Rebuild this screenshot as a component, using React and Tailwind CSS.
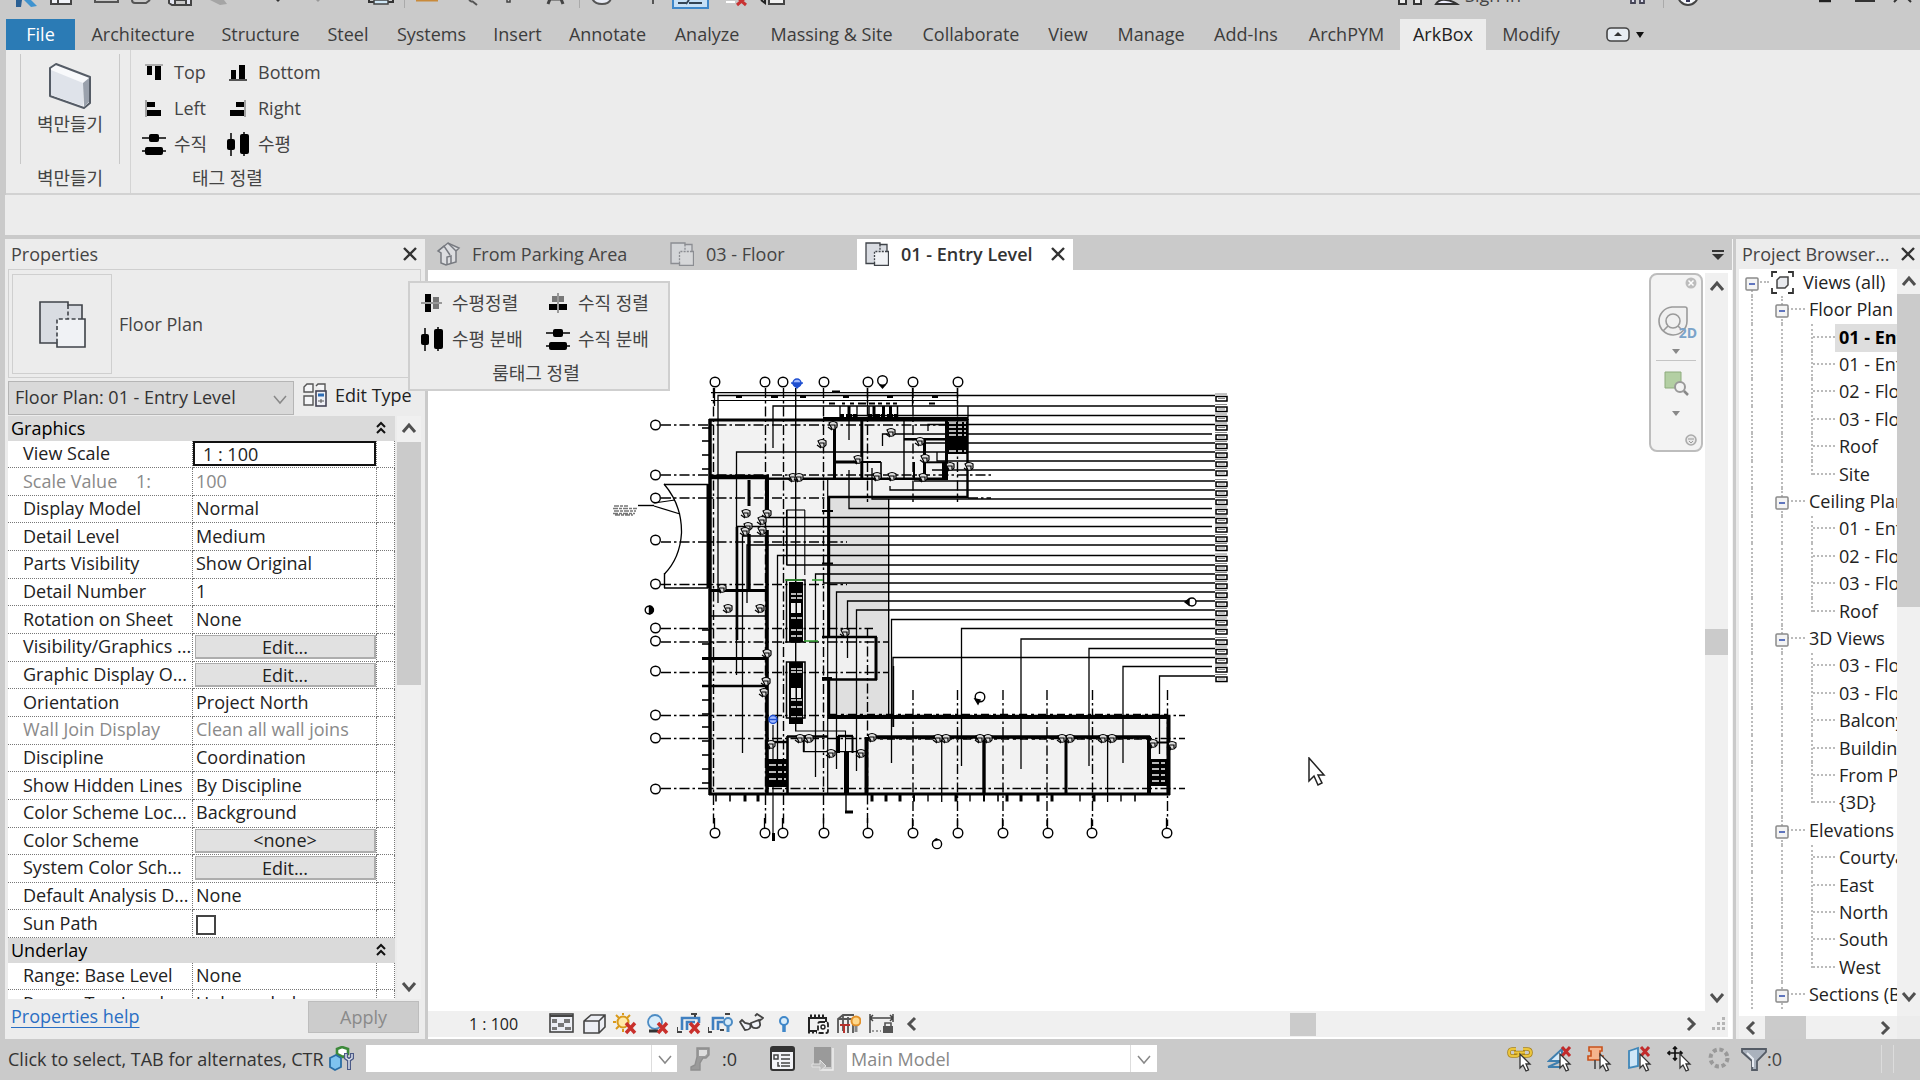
import React from "react";

/* ---------- shared glyphs ---------- */

function Svg({ w = 24, h = 24, vb, children, className = "" }) {
  return (
    <svg width={w} height={h} viewBox={vb || `0 0 ${w} ${h}`} fill="none" aria-hidden="true" className={"shrink-0 " + className}>
      {children}
    </svg>
  );
}

function Chevron({ dir = "up", thin = false, className = "" }) {
  const d = {
    up: "M2 11 L8 4 L14 11",
    down: "M2 5 L8 12 L14 5",
    left: "M11 2 L5 8 L11 14",
    right: "M5 2 L11 8 L5 14",
  }[dir];
  return (
    <Svg w={16} h={16} className={className}>
      <path d={d} stroke={thin ? "#888" : "#505050"} strokeWidth={thin ? 1.5 : 3} />
    </Svg>
  );
}

function CloseX({ size = 16 }) {
  return (
    <Svg w={size} h={size} vb="0 0 16 16">
      <path d="M2 2 L14 14 M14 2 L2 14" stroke="#333" strokeWidth="2.4" />
    </Svg>
  );
}

const Pages = ({ faded = false, size = 26 }) => (
  <Svg w={size} h={size} vb="0 0 48 48">
    <g stroke={faded ? "#8b8d92" : "#3f4349"} strokeWidth={size > 30 ? 1.6 : 2.6}>
      <path d="M2 2 H30 V5 H44 V19 H19 V43 H2 Z" fill={faded ? "#d3d5d8" : "#d9dce2"} stroke="none" />
      <path d="M19 19 H47 V47 H19 Z" fill={faded ? "#d6d7d9" : "#f0f2f5"} stroke="none" />
      <path d="M44 19 H47 V47 H19 V43 H2 V2 H30 V5 H44 V19" />
      <path d="M30 5 V19 M44 19 H19 V43" strokeDasharray="4 2.4" />
    </g>
  </Svg>
);

const AlignTop = () => (
  <Svg><path d="M3 5 H21" stroke="#999" strokeWidth="1.5" /><path d="M5 6 h5 v9 h-5z M13 6 h6 v14 h-6z" fill="#000" /></Svg>
);
const AlignBottom = () => (
  <Svg><path d="M3 20 H21" stroke="#222" strokeWidth="1.5" /><path d="M5 10 h5 v9 h-5z M13 5 h6 v14 h-6z" fill="#000" /></Svg>
);
const AlignLeft = () => (
  <Svg><path d="M4 4 V21" stroke="#888" strokeWidth="1.5" /><path d="M5 6 h8 v5 h-8z M5 14 h14 v6 h-14z" fill="#000" /></Svg>
);
const AlignRight = () => (
  <Svg><path d="M19 4 V21" stroke="#888" strokeWidth="1.5" /><path d="M10 6 h8 v5 h-8z M4 14 h14 v6 h-14z" fill="#000" /></Svg>
);
const DistV = () => (
  <Svg>
    <path d="M0 6 H24 M0 19 H24" stroke="#000" strokeWidth="1.5" />
    <rect x="7" y="2" width="10" height="8" rx="2" fill="#000" />
    <rect x="3" y="15" width="18" height="8" rx="2" fill="#000" />
  </Svg>
);
const DistH = () => (
  <Svg>
    <path d="M5 1 V24 M18 0 V24" stroke="#000" strokeWidth="1.5" />
    <rect x="1" y="7" width="8" height="11" rx="2" fill="#000" />
    <rect x="14" y="2" width="9" height="20" rx="2" fill="#000" />
  </Svg>
);
const CenterH = () => (
  <Svg><path d="M5 3 h6 v18 h-6z" fill="#000" /><path d="M13 6 h6 v12 h-6z" fill="#777" /><path d="M1 12 H22" stroke="#999" strokeWidth="2" /></Svg>
);
const CenterV = () => (
  <Svg><path d="M6 5 h12 v6 h-12z" fill="#777" /><path d="M3 13 h18 v6 h-18z" fill="#000" /><path d="M12 2 V22" stroke="#999" strokeWidth="2" /></Svg>
);

/* ---------- title strip ---------- */

function TitleBar() {
  return (
    <header className="relative flex h-[19px] shrink-0 items-start overflow-hidden pl-3 text-[#444]">
      <Svg w={28} h={8}><path d="M4 0 h6 l-1 7 h-5z" fill="#2a5f93" /><path d="M12 0 h7 l6 6 -6 1z" fill="#3f93cf" /></Svg>
      <Svg w={24} h={8} className="ml-2.5"><path d="M1 -4 h20 v8 h-20z M8 -4 v8" fill="#f1f3f8" stroke="#444" strokeWidth="2" /></Svg>
      <Svg w={26} h={8} className="ml-5"><path d="M1 -3 V2 H24 V-3" stroke="#555" strokeWidth="2" /></Svg>
      <Svg w={22} h={8} className="ml-2.5"><path d="M2 -4 V0 Q2 3 5 3 H16 L20 0" stroke="#555" strokeWidth="2" /></Svg>
      <Svg w={26} h={8} className="ml-4"><path d="M1 -4 V3 L4 5 H23 V-4 M7 4 V0 H18 V4" fill="#e4e6f2" stroke="#444" strokeWidth="2" /></Svg>
      <Svg w={22} h={8} className="ml-3.5"><path d="M2 0 h14 l3 4 -7 1z" fill="#a5a5a5" /></Svg>
      <Svg w={8} h={4} className="ml-11"><path d="M2 0 h4 l-2 2z" fill="#333" /></Svg>
      <Svg w={8} h={4} className="ml-8"><path d="M2 0 h4 l-2 2z" fill="#999" /></Svg>
      <Svg w={26} h={8} className="ml-[46px]"><path d="M1 0 V2 H25 V0" stroke="#333" strokeWidth="2" /><path d="M6 0 h14 v4 h-14z" fill="#cfe7f6" stroke="#444" strokeWidth="1.5" /></Svg>
      <span className="ml-2.5 h-2 w-px bg-[#aaa]" />
      <Svg w={24} h={4} className="ml-2.5"><path d="M1 0 H23" stroke="#c98a3a" strokeWidth="3" /></Svg>
      <Svg w={14} h={8} className="ml-7"><path d="M2 0 L5 2 M5 1 L10 5" stroke="#555" strokeWidth="2" /></Svg>
      <Svg w={8} h={4} className="ml-6"><path d="M2 0 v2 h3 v-2" stroke="#444" strokeWidth="1.5" /></Svg>
      <Svg w={22} h={8} className="ml-8"><path d="M3 4 L5 -1 H16 L18 4" stroke="#444" strokeWidth="3" /></Svg>
      <span className="ml-3 h-2 w-px bg-[#aaa]" />
      <Svg w={24} h={8} className="ml-2.5"><path d="M2 -2 Q4 4 12 4 T21 -2" fill="#e9ecf5" stroke="#555" strokeWidth="2" /></Svg>
      <Svg w={8} h={6} className="ml-9"><path d="M3 0 V4" stroke="#555" strokeWidth="2" /></Svg>
      <Svg w={38} h={10} className="ml-3.5"><path d="M1 -4 H36 V8 H1 Z" fill="#c6e0f7" stroke="#3f87c9" strokeWidth="2" /><path d="M6 3 h8 M17 3 h13 M14 4 l3 -4" stroke="#345" strokeWidth="2" /></Svg>
      <Svg w={24} h={8} className="ml-4"><path d="M0 2 h9" stroke="#fff" strokeWidth="2" /><path d="M11 5 L19 -2 M12 -2 L20 5" stroke="#c83232" strokeWidth="3" /></Svg>
      <Svg w={28} h={8} className="ml-2.5"><path d="M1 0 l4 3 v-3" stroke="#222" strokeWidth="2" /><path d="M9 -4 V4 H24 V-4" fill="#f2f2f2" stroke="#444" strokeWidth="2" /></Svg>
      <div className="ml-auto flex items-start pr-1.5">
        <Svg w={28} h={8}><path d="M2 -4 V4 H9 V-4 M17 -4 V4 H24 V-4" fill="#eee" stroke="#333" strokeWidth="2" /></Svg>
        <Svg w={28} h={8} className="ml-2"><path d="M3 4 Q6 -1 13 0 T24 4 Z" fill="#eef" stroke="#333" strokeWidth="2" /></Svg>
        <button className="-mt-[17px] ml-1 mr-2.5 text-[18px] leading-6">Sign In</button>
        <Svg w={18} h={8} className="ml-[98px]"><path d="M2 -4 V3 H6 V-4 M11 -4 V3 H15 V-4" fill="#dde" stroke="#445" strokeWidth="1.8" /></Svg>
        <span className="ml-4 h-2 w-px bg-[#aaa]" />
        <Svg w={26} h={8} className="ml-3"><circle cx="12" cy="-5" r="10" fill="#f5f7fb" stroke="#444" strokeWidth="2" /><path d="M10 0 h4 v2 h-4z" fill="#335" /></Svg>
        <Svg w={16} h={4} className="ml-[116px]"><path d="M1 1 H13" stroke="#222" strokeWidth="2.4" /></Svg>
        <Svg w={22} h={4} className="ml-5"><path d="M2 -2 V1 H20 V-2" stroke="#333" strokeWidth="2" /></Svg>
        <Svg w={22} h={4} className="ml-4"><path d="M2 2 L5 -1 M19 2 L16 -1" stroke="#333" strokeWidth="2" /></Svg>
      </div>
    </header>
  );
}

/* ---------- ribbon ---------- */

const TABS = [
  ["Architecture", "w-[130px]"], ["Structure", "w-[105px]"], ["Steel", "w-[70px]"], ["Systems", "w-[97px]"],
  ["Insert", "w-[75px]"], ["Annotate", "w-[105px]"], ["Analyze", "w-[94px]"], ["Massing & Site", "w-[155px]"],
  ["Collaborate", "w-[124px]"], ["View", "w-[70px]"], ["Manage", "w-[96px]"], ["Add-Ins", "w-[94px]"],
  ["ArchPYM", "w-[107px]"], ["ArkBox", "w-[86px]"], ["Modify", "w-[90px]"],
];

function RibbonTabs() {
  return (
    <nav className="flex h-[31px] shrink-0 items-stretch pl-1.5 text-[18px] leading-7 text-[#3c3c3c]">
      <button className="mr-[3px] w-[69px] bg-[#2b7bb5] pb-0.5 text-white">File</button>
      {TABS.map(([t, w]) => (
        <button key={t} className={`${w} whitespace-nowrap pb-0.5 ${t === "ArkBox" ? "bg-[#ececec] text-[#222]" : ""}`}>{t}</button>
      ))}
      <button aria-label="Minimize ribbon" className="ml-[30px] flex items-center gap-1.5">
        <Svg w={24} h={15}><rect x="1" y="1" width="22" height="13" rx="4" fill="#e8edf3" stroke="#444" strokeWidth="1.6" /><path d="M8 9 L12 5 L16 9Z" fill="#333" /></Svg>
        <Svg w={8} h={6}><path d="M0 0 H8 L4 6Z" fill="#111" /></Svg>
      </button>
    </nav>
  );
}

function Tool({ icon, children }) {
  return (
    <button className="flex items-center gap-2 whitespace-nowrap text-[18px] leading-6">
      {icon}
      <span>{children}</span>
    </button>
  );
}

function Ribbon() {
  return (
    <section className="ml-1.5 flex h-[145px] shrink-0 border-b-2 border-[#d2d2d2] bg-[#ececec] text-[#444]">
      <div className="flex w-[125px] flex-col items-center border-r border-[#d4d4d4] pl-1 pt-1">
        <button className="flex h-[110px] w-[100px] flex-col items-center border-x border-[#c8c8c8] pt-2 text-[18px] leading-7">
          <Svg w={44} h={48}>
            <path d="M2 6 L8 2 L42 15 V41 L36 46 L2 34 Z" fill="#f8f9fb" stroke="#555c66" strokeWidth="2" strokeLinejoin="round" />
            <path d="M3 8 L35 21 V44 L3 33 Z" fill="#dfe3ea" />
            <path d="M35 21 L41 16 V40 L36 45 Z" fill="#9aa1ac" />
          </Svg>
          벽만들기
        </button>
        <span className="text-[18px] leading-7">벽만들기</span>
      </div>
      <div className="flex w-[220px] flex-col pl-[11px] pt-2.5">
        <div className="grid grid-cols-[84px_1fr] gap-y-3">
          <Tool icon={<AlignTop />}>Top</Tool>
          <Tool icon={<AlignBottom />}>Bottom</Tool>
          <Tool icon={<AlignLeft />}>Left</Tool>
          <Tool icon={<AlignRight />}>Right</Tool>
          <Tool icon={<DistV />}>수직</Tool>
          <Tool icon={<DistH />}>수평</Tool>
        </div>
        <span className="mt-2 pl-[50px] text-[18px] leading-7">태그 정렬</span>
      </div>
    </section>
  );
}

/* ---------- properties ---------- */

const PROPS = [
  ["View Scale", "1 : 100", "input"],
  ["Scale Value    1:", "100", "off"],
  ["Display Model", "Normal"],
  ["Detail Level", "Medium"],
  ["Parts Visibility", "Show Original"],
  ["Detail Number", "1"],
  ["Rotation on Sheet", "None"],
  ["Visibility/Graphics ...", "Edit...", "button"],
  ["Graphic Display O...", "Edit...", "button"],
  ["Orientation", "Project North"],
  ["Wall Join Display", "Clean all wall joins", "off"],
  ["Discipline", "Coordination"],
  ["Show Hidden Lines", "By Discipline"],
  ["Color Scheme Loc...", "Background"],
  ["Color Scheme", "<none>", "button"],
  ["System Color Sch...", "Edit...", "button"],
  ["Default Analysis D...", "None"],
  ["Sun Path", "", "check"],
];

function GroupRow({ title }) {
  return (
    <tr className="bg-[#dadada]">
      <th colSpan={3} scope="colgroup" className="p-0 font-normal">
        <div className="flex items-center justify-between pl-[3px] pr-2">
          {title}
          <Svg w={12} h={14}><path d="M2 6 L6 2 L10 6 M2 12 L6 8 L10 12" stroke="#111" strokeWidth="2" /></Svg>
        </div>
      </th>
    </tr>
  );
}

function PropRow({ name, value, kind }) {
  const off = kind === "off";
  const line = "border-b border-dotted border-[#777]";
  return (
    <tr className={off ? "text-[#8a8a8a]" : "text-[#222]"}>
      <th scope="row" className={`${line} overflow-hidden whitespace-pre border-r p-0 pb-0.5 pl-[15px] text-left font-normal`}>{name}</th>
      <td className={`${line} overflow-hidden whitespace-nowrap border-r p-0 ${kind === "button" || kind === "input" ? "" : "pb-0.5 pl-[3px]"}`}>
        {kind === "input" ? (
          <input aria-label={name} defaultValue={value} className="block h-[25px] w-full border-2 border-[#111] bg-white pl-2 outline-none" />
        ) : kind === "button" ? (
          <button className="ml-0.5 block h-6 w-[181px] border border-b-2 border-r-2 border-[#adadad] bg-[#e1e1e1] leading-5">{value}</button>
        ) : kind === "check" ? (
          <input type="checkbox" aria-label={name} className="mt-1 block size-5 appearance-none border-2 border-[#444] bg-white" />
        ) : (
          value
        )}
      </td>
      <td className={`${line} border-r p-0`} />
    </tr>
  );
}

function Properties() {
  return (
    <aside className="flex w-[420px] shrink-0 flex-col bg-[#ececec] text-[18px] leading-6">
      <div className="flex h-[30px] items-center justify-between pl-1.5 pr-[7px] text-[#444]">
        <h2>Properties</h2>
        <button aria-label="Close properties"><CloseX /></button>
      </div>
      <div className="ml-[3px] mr-1 flex h-[109px] items-center gap-[7px] border border-[#cfcfcf] pl-[3px]">
        <div className="flex h-[100px] w-[100px] items-center justify-center border border-[#cfcfcf]"><Pages size={48} /></div>
        <span className="text-[#444]">Floor Plan</span>
      </div>
      <div className="flex h-[38px] items-center pl-[3px] pt-0.5">
        <div className="relative h-[34px] w-[286px]">
          <select aria-label="Element" className="h-full w-full appearance-none border border-[#b5b5b5] bg-[#d9d9d9] pb-0.5 pl-1.5 text-[#333]">
            <option>Floor Plan: 01 - Entry Level</option>
          </select>
          <Chevron dir="down" thin className="pointer-events-none absolute right-1.5 top-2.5" />
        </div>
        <button className="ml-2 flex items-center gap-[7px] pb-1.5 text-[#222]">
          <Svg w={26} h={26}>
            <path d="M2 5 L5 2 H11 V10 H2Z M14 4 L16 2 H23 V10 M2 14 H11 V23 H2Z" fill="#f5f6f8" stroke="#555" strokeWidth="1.4" />
            <rect x="14" y="9" width="10" height="15" fill="#eef0f6" stroke="#445" strokeWidth="1.6" />
            <path d="M16 13 h6" stroke="#2d6cb5" strokeWidth="3" /><path d="M16 19 h6 M19 17 v4" stroke="#555" />
          </Svg>
          Edit Type
        </button>
      </div>
      <div className="ml-[3px] mr-1 flex min-h-0 flex-1">
        <div className="min-h-0 flex-1 overflow-hidden">
          <table className="h-[602px] w-full table-fixed border-separate border-spacing-0 bg-white leading-6">
            <colgroup><col className="w-[185px]" /><col className="w-[184px]" /><col /></colgroup>
            <tbody>
              <GroupRow title="Graphics" />
              {PROPS.map(([n, v, k]) => <PropRow key={n} name={n} value={v} kind={k} />)}
              <GroupRow title="Underlay" />
              <PropRow name="Range: Base Level" value="None" />
              <PropRow name="Range: Top Level" value="Unbounded" />
            </tbody>
          </table>
        </div>
        <div className="ml-0.5 flex w-6 flex-col items-center bg-[#f0f0f0]">
          <div className="flex h-[26px] items-center"><Chevron dir="up" /></div>
          <div className="h-[243px] w-full bg-[#cbcbcb]" />
          <div className="mt-auto flex h-[26px] items-center"><Chevron dir="down" /></div>
        </div>
      </div>
      <div className="flex h-10 items-center justify-between pb-1 pl-1.5 pr-1.5">
        <a href="#help" className="pb-0.5 text-[#2a6fc4] underline underline-offset-4">Properties help</a>
        <button disabled className="h-8 w-[111px] border border-[#bdbdbd] bg-[#cccccc] text-[#8a8a8a]">Apply</button>
      </div>
    </aside>
  );
}

/* ---------- drawing ---------- */

/* leader lines: [y, start x, far end of the vertical leg] */
const LEADERS = [
  [395.5, 718, 603], [406, 773, 448], [415.5, 849, 440], [424.5, 928, 431], [434, 882.5, 446], [443, 924, 443],
  [452, 736.5, 675], [461, 937, 452], [470, 932, 470], [481, 914, 481], [490, 890, 486], [499, 872, 468],
  [508.5, 849, 470], [517.5, 767, 517], [526.5, 737, 640], [536, 742.5, 753], [545, 747, 603], [555.5, 777.5, 760],
  [565, 787, 510], [574, 815.5, 777], [583, 823, 583], [592, 836.5, 769], [601, 847.5, 658], [610, 856.5, 771],
  [619.5, 891.5, 763], [628.5, 961.5, 766], [639, 1021, 769], [648.5, 1089, 766], [657.5, 893, 727], [666.5, 1123, 763],
  [676, 1159.5, 754],
];
const TOP_BUBBLES = [715, 765, 783, 824, 868, 913, 958];
const BOTTOM_BUBBLES = [715, 765, 783, 824, 868, 913, 958, 1003, 1048, 1092, 1167];
const LEFT_BUBBLES = [425, 475, 498, 540, 584, 628, 641, 671, 715, 738, 789];
const ROW_GRID = [
  [425, 960], [475, 991], [498, 830], [542, 847], [584.5, 847], [628.5, 873], [642, 889], [672.5, 889],
  [715.5, 1185], [738.5, 1185], [788.5, 1185],
];
const COL_GRID = [
  [713.5, 388, 826], [765.5, 388, 826], [783.5, 388, 826], [823.5, 388, 826], [867.5, 388, 502], [867.5, 628, 826],
  [913, 388, 502], [913, 690, 826], [957.5, 388, 502], [957.5, 690, 826], [1003, 690, 826], [1047, 690, 826],
  [1092.5, 690, 826], [1167.5, 690, 826],
];
/* walls: [x1, y1, x2, y2, thickness] */
const WALLS = [
  [709, 420, 968, 420, 3], [823, 419, 968, 419, 4], [710, 419, 710, 795, 3.5], [967.5, 419, 967.5, 498, 2.4], [828, 497, 968, 497, 2.6],
  [829, 497, 829, 637, 2.4], [829, 679, 829, 718, 2.4], [822, 637, 877, 637, 2.6], [876, 637, 876, 680, 3], [822, 679.5, 877, 679.5, 2.6],
  [828, 717, 1169, 717, 4], [1168.5, 716, 1168.5, 795, 4], [709, 794, 1170, 794, 3], [709, 477, 769, 477, 4.5], [768, 478.7, 791, 478.7, 2.4],
  [803, 478.7, 948, 478.7, 2.4], [767, 477, 767, 512, 4], [767, 530, 767, 794, 3.6], [834.5, 422, 834.5, 478, 3], [861.8, 420, 861.8, 478, 3], [904, 420, 904, 478, 1.4],
  [834, 462, 860, 462, 3], [862, 462, 881, 462, 2], [881, 462, 881, 478, 1.6], [904, 439.3, 947, 439.3, 2.4], [924.5, 439, 924.5, 480, 3],
  [946.5, 420, 946.5, 478, 3], [924, 462.3, 947, 462.3, 2], [943.5, 462, 943.5, 478, 3], [914, 462, 914, 478, 2],
  [749, 480, 749, 506, 3], [749, 534, 749, 591, 3.4], [737, 527, 737, 640, 2.6], [709, 590.5, 768, 590.5, 3], [709, 616, 768, 616, 1.3],
  [702, 658.5, 766, 658.5, 3], [702, 686, 766, 686, 2.4], [708, 484, 708, 588, 3],
  [868, 737, 1150, 737, 3.6], [866.5, 737, 866.5, 794, 4], [941.7, 737, 941.7, 802, 1.3], [984, 738, 984, 794, 3.4], [1066, 738, 1066, 794, 3],
  [1107.6, 737, 1107.6, 802, 1.3], [1149, 736, 1149, 794, 4], [787, 736.5, 828, 736.5, 2.4], [787.5, 736, 787.5, 793, 2.6], [768, 742, 787, 742, 2.4],
  [846.5, 752, 846.5, 793, 5], [838.5, 736, 838.5, 753, 3], [852.5, 736, 852.5, 753, 2], [838, 736, 853, 736, 2.4], [827.7, 478, 827.7, 793, 1.2],
  [803.8, 737, 803.8, 752, 2], [803, 751.6, 866, 751.6, 1.2], [846, 794, 846, 812, 1.4], [845, 812, 853, 812, 3], [893.5, 666, 893.5, 727, 1.4],
  [822, 511, 833, 511, 2], [822, 563.5, 833, 563.5, 2], [822, 678, 832, 678, 2], [1150, 742.5, 1168, 742.5, 2],
  [888.7, 499, 888.7, 716, 1.4], [795.7, 388, 795.7, 731, 1.4], [795, 731, 846, 731, 1.1], [845.5, 731, 845.5, 752, 1.1],
  [711, 392.7, 957, 392.7, 1.2], [711, 400.5, 957, 400.5, 1.2], [773, 725, 773, 840, 1.2], [773.5, 833, 773.5, 841, 3], [968, 406, 968, 420, 1.3],
  [664, 484.5, 708, 484.5, 1.4], [664, 588, 708, 588, 1.4], [664.5, 573, 664.5, 588, 1.4], [786.5, 510, 805, 510, 1.1], [804.8, 510, 804.8, 575, 1.1], [786.5, 510, 786.5, 565, 1.1],
  [638, 505.5, 654, 505.5, 1.4], [654, 503, 675, 500, 1.2], [654, 506, 680, 514, 1.3], [849, 406, 849, 420, 3], [840, 406, 840, 420, 1.3], [857, 406, 857, 420, 1.3],
  [874, 406, 874, 420, 3], [883.5, 406, 883.5, 420, 3], [890.5, 406, 890.5, 420, 3], [897.5, 406, 897.5, 420, 1.5], [869, 406, 869, 420, 1.4],
];
const DOORS = [
  [833, 425], [822, 443], [858, 459], [793, 477], [799, 477], [877, 476], [892, 476], [891, 432], [920, 441], [925, 458], [923, 477], [950, 466], [969, 466],
  [746, 513], [748, 526], [767, 513], [762, 520], [745, 531], [762, 530], [722, 588], [728, 608], [760, 608], [767, 653], [766, 681], [764, 692],
  [771, 744], [800, 738], [809, 738], [831, 753], [861, 753], [845, 632], [872, 737], [938, 738], [946, 738], [980, 738], [988, 738],
  [1062, 738], [1070, 738], [1103, 738], [1112, 738], [1153, 743], [1172, 745],
];
const LEFT_TICKS = [428, 441, 455, 469, 630, 644, 700, 714, 727, 741, 755, 769, 783];
const BOTTOM_TICKS = [
  [716, 1.6], [730, 1.6], [745, 3], [758, 3], [872, 3], [886, 3], [900, 3], [914, 2], [928, 1.4], [956, 3], [970, 1.4], [984, 2],
  [998, 1.6], [1007, 3], [1021, 3], [1038, 3], [1052, 3], [1080, 1.4], [1094, 3], [1121, 1.4], [1135, 1.6],
];
/* stair cores: [x, y, w, h, tread offsets, tread dashes] */
const STAIRS = [
  [947, 422, 20, 32, [1, 5, 9, 13, 29], "7 2 4 2"],
  [789, 582, 14, 60, [12, 16, 36, 48, 54], "5 1"],
  [789, 662, 14, 62, [7, 10, 38, 45, 55], "5 1"],
  [767, 759, 20, 28, [6, 13, 20], "7 2 4 2"],
  [1150, 759, 18, 27, [4, 10, 16, 22], "7 2 4 2"],
];

function FloorPlanDrawing() {
  return (
    <svg viewBox="601 369 650 492" width="650" height="492" className="absolute left-[173px] top-[99px]" role="img" aria-label="Floor plan, entry level">
      <path d="M710 420 H968 V498 H829 V718 H1168 V794 H710 Z" fill="#f2f2f2" />
      <path d="M829 498 H889 V717 H829 Z" fill="#dfdfdf" />
      <path d="M829 637 H876 V680 H829 Z" fill="#f0f0f0" />
      <g stroke="#000" strokeWidth="1.4" strokeDasharray="10 3 2.5 3">
        {ROW_GRID.map(([y, x]) => <line key={y} x1="661" x2={x} y1={y} y2={y} />)}
        <line x1="968" x2="991" y1="498" y2="498" />
        {COL_GRID.map(([x, a, b]) => <line key={x + "-" + a} x1={x} x2={x} y1={a} y2={b} />)}
      </g>
      <g stroke="#000" strokeWidth="1.3" fill="none">
        {LEADERS.map(([y, x, e], i) => (
          <path key={y} d={`M${x} ${e} V${y} H${[4, 12, 14, 29].includes(i) ? 1212 : 1215}`} />
        ))}
        {[715, 868, 913, 958].map((x) => <line key={x} x1={x - 0.5} x2={x - 0.5} y1="388" y2="406" />)}
        {BOTTOM_BUBBLES.map((x) => <line key={x} x1={x - 0.5} x2={x - 0.5} y1="818" y2="828" />)}
        <path d="M664 484 Q682 505 681.5 533 Q680 558 664.5 574" />
      </g>
      <g stroke="#000">
        {WALLS.map(([a, b, c, d, w], i) => <line key={i} x1={a} y1={b} x2={c} y2={d} strokeWidth={w} />)}
        {LEFT_TICKS.map((y) => <line key={y} x1="702" x2="709" y1={y} y2={y} strokeWidth="1.6" />)}
        {BOTTOM_TICKS.map(([x, w]) => <line key={x} x1={x} x2={x} y1="795" y2="801.5" strokeWidth={w} />)}
        <path d="M829 714.5 H1168 M868 739 H1148" strokeWidth="1.6" strokeDasharray="8 4 3 4" />
        <path d="M736 397 h6 M771 397 h7 M800 397 h6 M843 397 h6 M887 397 h6 M932 397 h6 M832 391.5 h8 M829 403.5 h6 M842 403.5 h3 M850 403.5 h4 M858 403.5 h8 M869 403.5 h6 M878 403.5 h4 M886 403.5 h4 M893 403.5 h4 M929 403.5 h6" strokeWidth="1.8" />
        <path d="M840 416 h18 M868 416 h30" strokeWidth="4" strokeDasharray="4 2 6 1" />
      </g>
      {STAIRS.map(([x, y, w, h, treads, dash]) => (
        <g key={y + "-" + x}>
          <rect x={x} y={y} width={w} height={h} fill="#000" />
          {treads.map((o) => <line key={o} x1={x + 2} x2={x + w - 1} y1={y + o} y2={y + o} stroke="#f4f4f4" strokeWidth="1.3" strokeDasharray={dash} />)}
        </g>
      ))}
      <path d="M791 603 h4.5 v10 h-4.5z M797 603 h4 v10 h-4z M791 688 h4.5 v10 h-4.5z M797 688 h4 v10 h-4z" fill="#eee" />
      <path d="M786.5 580 V642 H805 V580 Z M786.5 662 V718 H805 V662 Z" stroke="#000" strokeWidth="1.5" fill="none" />
      <g stroke="#000" strokeWidth="1.2">
        {DOORS.map(([x, y], i) => (
          <g key={i}>
            <path d={`M${x - 4} ${y - 2} q4 -3 8 0 v4 q-2 3 -5 2 z`} fill="#dcdcdc" />
            <path d={`M${x - 5} ${y + 2} l4 3 M${x - 2} ${y} h4 v3`} fill="none" />
          </g>
        ))}
      </g>
      <g fill="#fff" stroke="#000" strokeWidth="1.4">
        {TOP_BUBBLES.map((x) => <circle key={x} cx={x} cy="382" r="4.8" />)}
        {BOTTOM_BUBBLES.map((x) => <circle key={x} cx={x} cy="833" r="4.8" />)}
        {LEFT_BUBBLES.map((y) => <circle key={y} cx="655.5" cy={y} r="4.8" />)}
        <circle cx="882.5" cy="380.5" r="4.8" /><path d="M879 385 h7 l-3.5 4z" fill="#000" stroke="none" />
        <circle cx="649" cy="610" r="3.8" /><path d="M649.500 606 a4 4 0 0 1 0 8z" fill="#000" />
        <circle cx="980" cy="697" r="4.8" /><path d="M975 699 l5 1 -2 4z" fill="#000" />
        <circle cx="937" cy="844" r="4.6" /><path d="M932 842 l4 -4 4 2z" fill="#000" stroke="none" />
        <circle cx="1192" cy="602" r="4" /><path d="M1185 602 l4 -3 v6z" fill="#000" />
      </g>
      <g stroke="#1f4fd0" strokeWidth="1.4" fill="#9fb8ff">
        <circle cx="797" cy="383" r="4" /><path d="M791.5 383 h11 l-5.500 6z" fill="#1f4fd0" stroke="none" /><path d="M791 383 h12" />
        <circle cx="773" cy="719.5" r="4" /><path d="M769 719.5 h8" />
      </g>
      <path d="M785 580 h17 M812 580 h11 M804 641 h14" stroke="#2c9a2c" strokeWidth="1.4" />
      <path d="M614 506 h14 M613 508.5 h24 M614 511 h22 M613 513.5 h22 M615 515 h18" stroke="#777" strokeWidth="1.3" strokeDasharray="5 1 3 1" />
      {LEADERS.map(([y]) => (
        <g key={y}>
          <rect x="1216" y={y + 1} width="11" height="4.5" fill="#fff" stroke="#000" strokeWidth="1.5" />
          <path d={`M1215 ${y - 1.5} h12 M1218 ${y + 3} h7`} stroke="#888" strokeWidth="1" />
        </g>
      ))}
    </svg>
  );
}

function NavBar() {
  return (
    <div className="absolute right-[25px] top-[3px] flex h-[179px] w-[54px] flex-col items-center rounded-lg border-2 border-[#bdbdbd] bg-[#f3f3f3]">
      <button aria-label="Close navigation bar" className="mr-1 mt-0.5 self-end">
        <Svg w={12} h={12}><circle cx="6" cy="6" r="5.5" fill="#bcbcbc" /><path d="M3.5 3.5 l5 5 M8.5 3.5 l-5 5" stroke="#fff" strokeWidth="1.5" /></Svg>
      </button>
      <button aria-label="Steering wheel" className="relative mt-4">
        <Svg w={38} h={36}>
          <path d="M15 2 H28 Q30 2 30 4 V16 A14 14 0 1 1 15 2Z" fill="#f0f0f0" stroke="#9a9a9a" strokeWidth="1.6" />
          <circle cx="16" cy="16" r="7" stroke="#9a9a9a" strokeWidth="1.6" /><path d="M11 21 L6 26 M21 21 L24 24" stroke="#9a9a9a" strokeWidth="1.6" />
        </Svg>
        <span className="absolute -right-0.5 bottom-0.5 text-[14px] font-bold leading-3 text-[#7ba3c9]">2D</span>
      </button>
      <Svg w={8} h={5} className="mt-2"><path d="M0 0 H8 L4 5Z" fill="#888" /></Svg>
      <span className="mt-1.5 h-px w-10 bg-[#c4c4c4]" />
      <button aria-label="Zoom region" className="mt-2.5">
        <Svg w={26} h={26}><path d="M2 1 h16 v16 h-16z" fill="#b3cfa3" stroke="#8dab7d" /><circle cx="17" cy="16" r="5" fill="#f3f3f3" stroke="#999" strokeWidth="2" /><path d="M21 20 l4 4" stroke="#888" strokeWidth="2.5" /></Svg>
      </button>
      <Svg w={8} h={5} className="mt-3.5"><path d="M0 0 H8 L4 5Z" fill="#888" /></Svg>
      <button aria-label="Navigation options" className="mb-1 mr-1 mt-auto self-end">
        <Svg w={12} h={12}><circle cx="6" cy="6" r="5" fill="#e8e8e8" stroke="#aaa" strokeWidth="1.6" /><path d="M3 5 h6 M4 7 l2 2 2 -2" stroke="#999" /></Svg>
      </button>
    </div>
  );
}

function FloatingPanel() {
  return (
    <section aria-label="룸태그 정렬" className="absolute left-[408px] top-[281px] z-10 w-[262px] border-2 border-[#cfcfcf] bg-[#ececec] pb-0.5 pl-2.5 pt-2 text-[#444]">
      <div className="grid grid-cols-[126px_1fr] gap-y-3">
        <Tool icon={<CenterH />}>수평정렬</Tool>
        <Tool icon={<CenterV />}>수직 정렬</Tool>
        <Tool icon={<DistH />}>수평 분배</Tool>
        <Tool icon={<DistV />}>수직 분배</Tool>
      </div>
      <p className="mt-2 pr-4 text-center text-[18px] leading-7">룸태그 정렬</p>
    </section>
  );
}

const RedX = ({ x = 12, y = 10 }) => <path d={`M${x} ${y} l9 10 M${x + 9} ${y} l-9 10`} stroke="#c9302c" strokeWidth="3.4" />;

const VIEW_ICONS = [
  ["Detail level", "ml-[31px]", <><rect x="1" y="1" width="23" height="18" fill="#eceef4" stroke="#444" strokeWidth="1.6" /><path d="M1 3 H24" stroke="#444" strokeWidth="2" /><path d="M3 6 h5 v4 h-5z M15 6 h6 v4 h-6z M9 10 h6 v4 h-6z M3 14 h5 v3 h-5z M16 14 h6 v3 h-6z" fill="#777" /></>],
  ["Visual style", "ml-2", <><path d="M2 8 L9 2 H23 V14 L17 20 H2Z M2 8 H17 V20 M17 8 L23 2" fill="#eceef4" stroke="#444" strokeWidth="1.6" /></>],
  ["Sun path", "ml-1.5", <><circle cx="10" cy="9" r="5.5" fill="#ffe9a8" stroke="#d99a1c" strokeWidth="2" /><path d="M10 0 v2 M0 9 h3 M3 2 l3 3 M3 16 l3 -3 M17 2 l-3 3 M10 16 v3" stroke="#d99a1c" strokeWidth="2" /><RedX x={13} /></>],
  ["Shadows", "ml-2", <><circle cx="9" cy="9" r="7" fill="#d8ecfa" stroke="#4d8cc4" strokeWidth="1.8" /><path d="M3 18 h9" stroke="#333" strokeWidth="3" /><RedX x={12} /></>],
  ["Crop view", "ml-1.5", <><path d="M5 17 V5 H22 V10 M10 17 V9 H18" stroke="#3f7fc0" strokeWidth="2.6" /><path d="M0 14 v5 h5 M18 0 v4 M14 1 h6" stroke="#444" strokeWidth="2" /><RedX x={13} /></>],
  ["Crop region", "ml-1.5", <><path d="M5 17 V5 H16 M10 17 V9 H15" stroke="#3f7fc0" strokeWidth="2.6" /><path d="M0 14 v5 h4 M17 1 h5 M12 17 h4" stroke="#444" strokeWidth="2" /><circle cx="20" cy="9" r="4" fill="#d8ecfa" stroke="#4d8cc4" strokeWidth="2" /><path d="M20 13 v6" stroke="#4d8cc4" strokeWidth="3" /></>],
  ["Temporary hide", "ml-1.5", <><path d="M3 7 L1 9 L6 17 Q13 17 11 11 L6 10 Z M12 10 L20 7 Q23 14 18 15 Q12 16 12 10 Z" fill="#f0f3f8" stroke="#444" strokeWidth="1.8" /><path d="M20 8 L24 5 L18 1 L16 3" stroke="#444" strokeWidth="1.8" /></>],
  ["Reveal hidden", "ml-2", <><circle cx="12" cy="8" r="4" fill="#d8ecfa" stroke="#3f87c9" strokeWidth="2" /><path d="M12 12 v7" stroke="#3f87c9" strokeWidth="3.5" /></>],
  ["Temporary view", "ml-2", <><path d="M3 5 H21 V9 M4 4 V18 H12" stroke="#222" strokeWidth="2" /><path d="M5 3 H20 M3 19 H12" stroke="#222" strokeWidth="3" strokeDasharray="2 2" /><rect x="13" y="9" width="10" height="11" rx="2" fill="#f6f6f6" stroke="#222" strokeWidth="1.8" strokeDasharray="5 2" /><circle cx="18" cy="14" r="2" stroke="#222" strokeWidth="1.4" /></>],
  ["Analytical model", "ml-1.5", <><path d="M2 20 V6 L7 2 H18 M7 2 V18 M12 4 V20 M2 6 H16 M17 9 V20" stroke="#555" strokeWidth="1.8" /><path d="M4 12 H14 M8 12 V20" stroke="#b5322d" strokeWidth="2" /><circle cx="20" cy="8" r="4.5" fill="#ffd98c" stroke="#e2912a" strokeWidth="2" /><path d="M20 13 v6" stroke="#888" strokeWidth="3" /></>],
  ["Constraints", "ml-2", <><path d="M1 1 V20 M24 1 V9 M1 5 H24 M4 2 L1 5 L4 8 M21 2 L24 5 L21 8" stroke="#444" strokeWidth="1.5" /><path d="M3 18 H12" stroke="#444" strokeDasharray="2 2" /><rect x="14" y="13" width="10" height="7" fill="#555" /><path d="M16 13 v-3 h6 v3" stroke="#555" strokeWidth="1.6" /></>],
];

function Canvas() {
  return (
    <main className="flex min-w-0 flex-1 flex-col border-r border-[#f4f4f4] bg-white">
      <div className="flex h-[31px] shrink-0 items-stretch bg-[#cacaca] text-[18px] leading-7 text-[#444]">
        <button className="flex w-[242px] items-center pb-px pl-2">
          <Svg w={25} h={25} className="mr-[11px]">
            <path d="M2 9 L12 1 L23 6 L20 9 V20 L10 23 L5 21 V11 Z" fill="#dcdde0" stroke="#777a80" strokeWidth="1.5" />
            <path d="M2 9 L8 4 L14 13 M11 22 V15 L15 14 V21 M12 1 L20 9" stroke="#777a80" strokeWidth="1.5" />
          </Svg>
          From Parking Area
        </button>
        <button className="flex w-[187px] items-center gap-3 pb-px"><Pages faded size={24} />03 - Floor</button>
        <div className="flex w-[216px] items-center justify-between bg-white pb-px pl-2 pr-[7px]">
          <button className="flex items-center gap-3 font-semibold text-[#333]"><Pages size={24} />01 - Entry Level</button>
          <button aria-label="Close view"><CloseX /></button>
        </div>
        <button aria-label="View list" className="ml-auto mr-[7px]">
          <Svg w={14} h={12}><path d="M1 2 H13" stroke="#333" strokeWidth="2" /><path d="M1 5 H13 L7 11Z" fill="#333" /></Svg>
        </button>
      </div>
      <div className="flex min-h-0 flex-1">
        <div className="relative min-w-0 flex-1 overflow-hidden">
          <FloorPlanDrawing />
          <Svg w={20} h={32} className="absolute left-[879px] top-[487px]">
            <path d="M2 1 L2 24 L7 19 L11 28 L15 26 L11 18 L17 18 Z" fill="#fff" stroke="#222" strokeWidth="1.5" />
          </Svg>
        </div>
        <div className="relative mr-1 mt-[3px] flex w-[23px] flex-col items-center bg-[#f0f0f0]">
          <div className="flex h-7 items-center"><Chevron dir="up" /></div>
          <div className="mt-[328px] h-[26px] w-full bg-[#cbcbcb]" />
          <div className="mt-auto flex h-7 items-center"><Chevron dir="down" /></div>
          <div className="absolute right-0 top-[-3px]"><NavBar /></div>
        </div>
      </div>
      <div className="mb-0.5 mr-1 flex h-[26px] shrink-0 items-center bg-[#f0f0f0] pl-[41px] text-[#222]">
        <span className="whitespace-nowrap text-[16px] leading-6">1 : 100</span>
        {VIEW_ICONS.map(([label, ml, art]) => (
          <button key={label} aria-label={label} className={ml}><Svg w={25} h={22}>{art}</Svg></button>
        ))}
        <button aria-label="Scroll left" className="ml-2.5"><Chevron dir="left" /></button>
        <div className="ml-[370px] h-[23px] w-[26px] bg-[#cbcbcb]" />
        <button aria-label="Scroll right" className="ml-auto mr-[11px]"><Chevron dir="right" /></button>
        <Svg w={18} h={16}><g fill="#b5b5b5"><path d="M12 1h3v3h-3z M7 6h3v3h-3z M12 6h3v3h-3z M2 11h3v3h-3z M7 11h3v3h-3z M12 11h3v3h-3z" /></g></Svg>
      </div>
    </main>
  );
}

/* ---------- project browser ---------- */

const TREE = [
  [0, "Views (all)"],
  [1, "Floor Plan"], [2, "01 - Entry Level", "current"], [2, "01 - Entry Level"], [2, "02 - Floor"], [2, "03 - Floor"], [2, "Roof"], [2, "Site", "last"],
  [1, "Ceiling Plans"], [2, "01 - Entry Level"], [2, "02 - Floor"], [2, "03 - Floor"], [2, "Roof", "last"],
  [1, "3D Views"], [2, "03 - Floor"], [2, "03 - Floor"], [2, "Balcony"], [2, "Building"], [2, "From Parking Area"], [2, "{3D}", "last"],
  [1, "Elevations"], [2, "Courtyard"], [2, "East"], [2, "North"], [2, "South"], [2, "West", "last"],
  [1, "Sections (Building)"],
];

/* one indent column of the tree: a dotted trunk and, when asked, a dotted branch */
function Guide({ left, right, half = "", branch = false, children }) {
  const t = half === "top" ? "self-start h-1/2" : half === "bottom" ? "self-end h-1/2" : "self-stretch";
  return (
    <span className="relative flex shrink-0 self-stretch">
      <span className={`${left} ${t} border-r-2 border-dotted border-[#bbb]`} />
      <span className={`${right} h-1/2 ${branch ? "border-b-2 border-dotted border-[#bbb]" : ""}`} />
      {children}
    </span>
  );
}

function Expander({ className }) {
  return (
    <button aria-label="Collapse" className={"absolute top-1/2 -mt-1.5 " + className}>
      <Svg w={14} h={14}><rect x="1" y="1" width="12" height="12" rx="1" fill="#f3f3f3" stroke="#8a8a8a" strokeWidth="1.5" /><path d="M4 7 H10" stroke="#3a55b0" strokeWidth="1.6" /></Svg>
    </button>
  );
}

function TreeRow({ level, label, flag }) {
  return (
    <li className="flex min-h-0 flex-1 items-center whitespace-nowrap">
      {level === 0 ? (
        <>
          <Guide left="w-3.5" right="w-4" half="bottom" branch><Expander className="left-1.5" /></Guide>
          <Svg w={23} h={23} className="mx-0.5"><path d="M1 6 V1 H6 M17 1 H22 V6 M22 17 V22 H17 M6 22 H1 V17" stroke="#333" strokeWidth="1.8" /><path d="M6 9 L9 6 H17 V14 L14 17 H6Z" fill="#e8eaee" stroke="#444" strokeWidth="1.5" /></Svg>
          <span className="pb-0.5 pl-[7px]">{label}</span>
        </>
      ) : (
        <>
          <Guide left="w-3.5" right="w-3.5" />
          <Guide left="w-4" right={level === 1 ? "w-[22px]" : "w-3.5"} branch={level === 1}>
            {level === 1 && <Expander className="left-2" />}
          </Guide>
          {level === 2 && <Guide left="w-4" right="w-[22px]" half={flag === "last" ? "top" : ""} branch />}
          <span className={`pb-0.5 pl-1 ${flag === "current" ? "flex-1 bg-[#dedede] font-bold text-black" : ""}`}>{label}</span>
        </>
      )}
    </li>
  );
}

function Browser() {
  return (
    <aside className="flex w-[184px] shrink-0 flex-col bg-[#ececec] text-[18px] leading-[26px] text-[#222]">
      <div className="flex h-[30px] shrink-0 items-center justify-between pl-1.5 pr-1 text-[#444]">
        <h2>Project Browser...</h2>
        <button aria-label="Close project browser"><CloseX /></button>
      </div>
      <div className="flex min-h-0 flex-1">
        <div className="ml-[3px] flex min-w-0 flex-1 flex-col">
          <div className="min-h-0 flex-1 overflow-hidden bg-white">
            <ul className="flex h-[740px] flex-col">
              {TREE.map(([l, t, f], i) => <TreeRow key={i} level={l} label={t} flag={f} />)}
            </ul>
          </div>
          <div className="flex h-[23px] shrink-0 items-center bg-[#f0f0f0] pl-1">
            <Chevron dir="left" />
            <div className="ml-1.5 h-full w-[41px] bg-[#cbcbcb]" />
            <Chevron dir="right" className="ml-auto mr-1" />
          </div>
        </div>
        <div className="mb-[23px] flex w-[23px] shrink-0 flex-col items-center bg-[#f0f0f0]">
          <div className="flex h-[25px] items-center"><Chevron dir="up" /></div>
          <div className="h-[313px] w-full bg-[#cbcbcb]" />
          <div className="mt-auto flex h-7 items-start"><Chevron dir="down" /></div>
        </div>
      </div>
    </aside>
  );
}

/* ---------- status bar ---------- */

const Pointer = () => <path d="M13 8 V22 L16 19 L19 25 L21.5 24 L19 18 H23 Z" fill="#fff" stroke="#333" strokeWidth="1.3" />;

const PICKS = [
  ["Select links", <><path d="M9 3 H5 Q2 3 2 6.5 T5 10 H9 Q12 10 12 6.5 M16 3 H20 Q24 3 24 6.5 T20 10 H16 Q13 10 13 6.5 M7 6.5 h11" stroke="#a8821a" strokeWidth="3.6" /><path d="M9 3 H5 Q2 3 2 6.5 T5 10 H9 Q12 10 12 6.5 M16 3 H20 Q24 3 24 6.5 T20 10 H16 Q13 10 13 6.5 M7 6.5 h11" stroke="#ecc63c" strokeWidth="2" /><Pointer /></>],
  ["Select underlay", <><path d="M1 21 L12 16 H16 M1 21 H14 M2 15 L15 3 V15Z" fill="#d8ecfa" stroke="#3f7fae" strokeWidth="2" /><path d="M15 1 l8 9 M23 1 l-8 9" stroke="#c22b2b" strokeWidth="3" /><Pointer /></>],
  ["Select pinned", <><path d="M2 1 h13 v4 h-2 v5 h3 v4 h-15 v-4 h3 v-5 h-2z" fill="#f5b48c" stroke="#c8511b" strokeWidth="1.6" /><path d="M8 14 v9" stroke="#444" strokeWidth="1.6" /><Pointer /></>],
  ["Select by face", <><path d="M2 5 L11 2 V20 L2 22Z" fill="#cfe6f7" stroke="#3f87b9" strokeWidth="1.8" /><path d="M14 1 l8 9 M22 1 l-8 9" stroke="#c22b2b" strokeWidth="3" /><Pointer /></>],
  ["Drag on selection", <><path d="M8 1 V14 M1 7 H15 M6 3 L8 1 L10 3 M6 12 L8 14 L10 12 M3 5 L1 7 L3 9 M13 5 L15 7 L13 9" stroke="#111" strokeWidth="1.7" /><Pointer /></>],
  ["Background processes", <circle cx="12" cy="12" r="8.5" stroke="#999" strokeWidth="4" strokeDasharray="4 2.7" />],
];

function StatusBar() {
  return (
    <footer className="flex h-[41px] shrink-0 items-center whitespace-nowrap bg-[#cacaca] pb-0.5 pl-2 text-[18px] leading-6 text-[#333]">
      <span className="w-[318px]">Click to select, TAB for alternates, CTR</span>
      <Svg w={26} h={26} className="ml-[3px]">
        <path d="M8 3 L13 1 L19 3 V8 L14 11 L8 8Z" fill="#fff" stroke="#3d8a3a" strokeWidth="2.6" />
        <path d="M1 12 L7 9 L12 12 V21 L6 24 L1 21Z" fill="#7fc3ef" stroke="#2a6ea5" strokeWidth="1.8" />
        <path d="M17 7 V12 L20 14 L23 12 V7 M20 14 V24" stroke="#4c5a86" strokeWidth="4" />
        <path d="M17 8 V12 L20 14 L23 12 V8 M20 14 V23" stroke="#e4e8f2" strokeWidth="1.4" />
      </Svg>
      <div className="relative ml-[11px] h-[27px] w-[311px] bg-white">
        <select aria-label="Workset" className="h-full w-full appearance-none bg-transparent"><option></option></select>
        <span className="pointer-events-none absolute inset-y-0 right-0 flex w-[26px] items-center justify-center border-l border-[#ddd]"><Chevron dir="down" thin /></span>
      </div>
      <Svg w={24} h={26} className="ml-3"><path d="M8 2 h12 v7 l-3 3 h-3 l-3 5 v7 h-9 v-3 l4 -2 l2 -8z" fill="#9a9a9a" stroke="#8f8f8f" strokeWidth="1.4" /><path d="M10 4 h8 v4 l-2 2 h-6z" fill="#dedede" /></Svg>
      <span className="ml-[9px]">:0</span>
      <Svg w={25} h={25} className="ml-[33px]"><rect x="1" y="1" width="23" height="23" rx="2" fill="#f3f4f8" stroke="#333" strokeWidth="2" /><path d="M1 4 H24" stroke="#333" strokeWidth="4" /><path d="M4 9 h4 v4 h-4z M11 9 h9 M11 13 h9 M11 17 h9 M11 20 h9 M8 16 v4 h2" stroke="#444" strokeWidth="1.5" /></Svg>
      <Svg w={25} h={25} className="ml-4"><path d="M3 1 h17 v20 h-17z" fill="#9a9a9a" /><path d="M22 2 v22 h-12" stroke="#eee" strokeWidth="1.5" /><path d="M1 18 h8 v-4 l6 6 -6 5 v-4 h-8z" fill="#bdbdbd" stroke="#e2e2e2" /></Svg>
      <div className="relative ml-[11px] h-[27px] w-[310px] bg-white text-[#888]">
        <select aria-label="Design option" disabled className="block h-full w-full appearance-none bg-transparent pl-1 leading-6 opacity-100"><option>Main Model</option></select>
        <span className="pointer-events-none absolute inset-y-0 right-0 flex w-[27px] items-center justify-center border-l border-[#ddd]"><Chevron dir="down" thin /></span>
      </div>
      <div className="ml-auto flex items-center gap-[14px]">
        {PICKS.map(([label, art]) => <button key={label} aria-label={label}><Svg w={26} h={26}>{art}</Svg></button>)}
      </div>
      <button className="ml-2 flex items-center text-[#444]">
        <Svg w={26} h={24}><path d="M1 2 H25 V5 L16 14 V23 H11 V14 L1 5 Z" fill="#aab2bd" stroke="#555c66" strokeWidth="1.8" /><path d="M6 6 L12 12 V20" stroke="#e8ecf2" strokeWidth="2" /></Svg>
        <span>:0</span>
      </button>
      <span className="ml-[99px] h-7 w-px bg-[#dcdcdc]" />
      <span className="ml-[11px] mr-[26px] h-7 w-px bg-[#dcdcdc]" />
    </footer>
  );
}

export default function App() {
  return (
    <div className="relative flex h-screen w-full flex-col overflow-hidden bg-[#cacaca] font-['Open_Sans','Noto_Sans_CJK_KR',sans-serif]">
      <TitleBar />
      <RibbonTabs />
      <Ribbon />
      <div className="ml-[5px] h-10 shrink-0 bg-[#ececec]" />
      <div className="flex min-h-0 flex-1 gap-[3px] pl-[5px] pt-1">
        <Properties />
        <Canvas />
        <Browser />
      </div>
      <FloatingPanel />
      <StatusBar />
    </div>
  );
}
